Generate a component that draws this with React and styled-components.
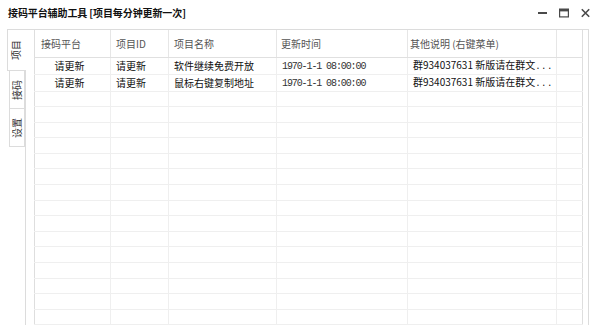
import React from "react";
import styled, { createGlobalStyle } from "styled-components";

const GlobalStyle = createGlobalStyle`
  html, body {
    margin: 0;
    padding: 0;
    background: #fff;
  }
  body {
    font-family: "Noto Sans CJK SC", "Noto Sans", sans-serif;
    color: #111;
  }
`;

const Window = styled.div`
  width: 600px;
  height: 325px;
  overflow: hidden;
  display: flex;
  flex-direction: column;
  background: #fff;
`;

const TitleBar = styled.div`
  height: 29px;
  flex: 0 0 29px;
  display: flex;
  align-items: center;
  justify-content: space-between;
  padding: 0 10px 4px 8px;
  box-sizing: border-box;
`;

const Title = styled.div`
  font-size: 10px;
  font-weight: 700;
  color: #111;
  letter-spacing: -0.1px;
`;

const Controls = styled.div`
  display: flex;
  align-items: center;
  gap: 12px;

  svg {
    display: block;
  }
`;

const Body = styled.div`
  flex: 1;
  display: flex;
  padding: 0 11px 0 7px;
  min-height: 0;
`;

const TabStrip = styled.div`
  width: 18px;
  flex: 0 0 18px;
  display: flex;
  flex-direction: column;
  align-items: flex-end;
`;

const Tab = styled.div`
  width: ${p => (p.$active ? "19px" : "16px")};
  height: ${p => (p.$active ? "42px" : "38px")};
  margin-right: ${p => (p.$active ? "-1px" : "0")};
  box-sizing: border-box;
  border: 1px solid #dcdcdc;
  border-right: ${p => (p.$active ? "none" : "1px solid #dcdcdc")};
  border-top: ${p => (p.$active || p.$first ? "1px solid #dcdcdc" : "none")};
  background: #fff;
  position: relative;
  z-index: 1;
  display: flex;
  align-items: center;
  justify-content: center;
`;

/* label reads bottom-to-top, like a WinForms left-aligned tab */
const TabLabel = styled.span`
  display: inline-block;
  white-space: nowrap;
  transform: rotate(-90deg);
  font-size: 10px;
  color: #333;
  line-height: 1;
  margin-left: ${p => (p.$active ? "-2px" : "0")};
`;

const Panel = styled.div`
  flex: 1;
  border: 1px solid #dcdcdc;
  border-bottom: none;
  padding: 0 6px 0 8px;
  min-width: 0;
  overflow: hidden;
`;

const Table = styled.table`
  width: 548px;
  border-collapse: collapse;
  table-layout: fixed;
  border-left: 1px solid #dedede;
  border-right: 1px solid #dedede;
`;

const HeadCell = styled.th`
  height: 27px;
  box-sizing: border-box;
  padding: 0 0 0 ${p => p.$pad || 5}px;
  text-align: left;
  font-weight: 400;
  font-size: 10px;
  color: #555;
  border-right: 1px solid #e6e6e6;
  border-bottom: 1px solid #e0e0e0;
  white-space: nowrap;
  overflow: hidden;

  &:last-child {
    border-right: none;
  }
`;

const Cell = styled.td`
  height: 15.6px;
  box-sizing: border-box;
  padding: 0 ${p => (p.$center ? 6 : 0)}px 0 ${p => (p.$center ? 0 : 5)}px;
  text-align: ${p => (p.$center ? "center" : "left")};
  font-size: 10px;
  line-height: 14px;
  color: #111;
  border-right: 1px solid #efefef;
  border-bottom: 1px solid #efefef;
  white-space: nowrap;
  overflow: hidden;

  &:last-child {
    border-right: none;
  }
`;

const Mono = styled.span`
  font-family: "Liberation Mono", monospace;
  font-size: 10px;
  letter-spacing: -1.1px;
  color: #333;
`;

const Dots = styled.span`
  font-family: "Liberation Mono", monospace;
  font-size: 9px;
  letter-spacing: 0.5px;
`;

const columns = [
  { title: "接码平台", width: 76, pad: 6 },
  { title: "项目ID", width: 58 },
  { title: "项目名称", width: 108 },
  { title: "更新时间", width: 131, pad: 4 },
  { title: "其他说明 (右键菜单)", width: 149, pad: 2 },
  { title: "", width: 26 },
];

const rows = [
  { platform: "请更新", id: "请更新", name: "软件继续免费开放", time: "1970-1-1 08:00:00", note: "群934037631 新版请在群文" },
  { platform: "请更新", id: "请更新", name: "鼠标右键复制地址", time: "1970-1-1 08:00:00", note: "群934037631 新版请在群文" },
];

const EMPTY_ROWS = 16;

const MinIcon = () => (
  <svg width="9" height="10" viewBox="0 0 9 10">
    <rect x="0" y="4" width="9" height="2" fill="#4a4a4a" />
  </svg>
);

const MaxIcon = () => (
  <svg width="10" height="10" viewBox="0 0 10 10">
    <rect x="0.6" y="1.1" width="8.8" height="7.8" fill="none" stroke="#4a4a4a" strokeWidth="1.2" />
    <rect x="0.6" y="1" width="8.8" height="2.4" fill="#4a4a4a" />
  </svg>
);

const CloseIcon = () => (
  <svg width="9" height="10" viewBox="0 0 9 10">
    <path d="M0.8 1.3 L8.2 8.7 M8.2 1.3 L0.8 8.7" stroke="#4a4a4a" strokeWidth="1.6" />
  </svg>
);

const tabs = [
  { label: "项目", active: true },
  { label: "接码" },
  { label: "设置" },
];

export default function App() {
  return (
    <>
      <GlobalStyle />
      <Window>
        <TitleBar>
          <Title>接码平台辅助工具 [项目每分钟更新一次]</Title>
          <Controls>
            <MinIcon />
            <MaxIcon />
            <CloseIcon />
          </Controls>
        </TitleBar>
        <Body>
          <TabStrip>
            {tabs.map((t, i) => (
              <Tab key={t.label} $active={t.active} $first={i === 0}>
                <TabLabel $active={t.active}>{t.label}</TabLabel>
              </Tab>
            ))}
          </TabStrip>
          <Panel>
            <Table>
              <colgroup>
                {columns.map((c, i) => (
                  <col key={i} style={{ width: c.width }} />
                ))}
              </colgroup>
              <thead>
                <tr>
                  {columns.map((c, i) => (
                    <HeadCell key={i} $pad={c.pad}>{c.title}</HeadCell>
                  ))}
                </tr>
              </thead>
              <tbody>
                {rows.map((r, i) => (
                  <tr key={i}>
                    <Cell $center>{r.platform}</Cell>
                    <Cell>{r.id}</Cell>
                    <Cell>{r.name}</Cell>
                    <Cell><Mono>{r.time}</Mono></Cell>
                    <Cell>{r.note}<Dots>...</Dots></Cell>
                    <Cell />
                  </tr>
                ))}
                {Array.from({ length: EMPTY_ROWS }).map((_, i) => (
                  <tr key={"e" + i}>
                    {columns.map((c, j) => (
                      <Cell key={j} />
                    ))}
                  </tr>
                ))}
              </tbody>
            </Table>
          </Panel>
        </Body>
      </Window>
    </>
  );
}
